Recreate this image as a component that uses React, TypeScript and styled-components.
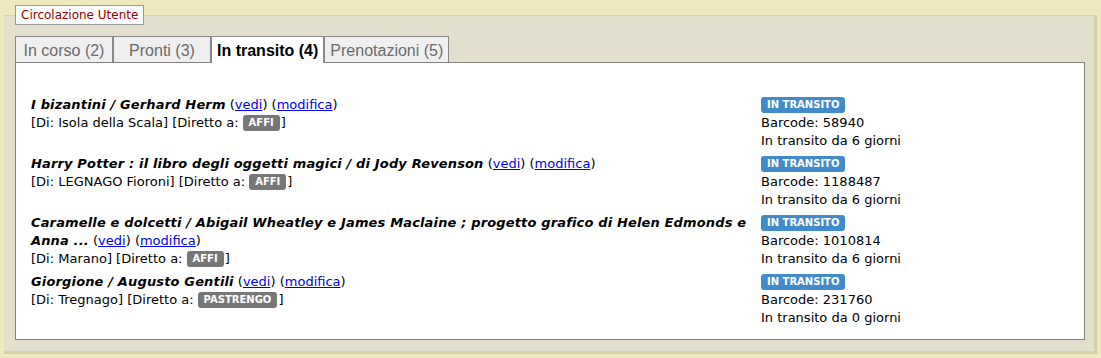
import React from "react";
import styled, { createGlobalStyle, css } from "styled-components";

const GlobalStyle = createGlobalStyle`
  html, body {
    margin: 0;
    padding: 0;
    background: #eee8bd;
  }
  body {
    font-family: "DejaVu Sans", Tahoma, sans-serif;
    font-size: 13px;
    color: #000;
  }
`;

const Page = styled.div`
  padding: 5px 4px 3px 4px;
`;

const Frame = styled.fieldset`
  margin: 0;
  padding: 0 9px 11px 10px;
  background: #e2dfcc;
  border-style: solid;
  border-color: #d8d3ae #d6d0a8 #d6d0a8 #e2dfcc;
  border-width: 1px 3px 3px 1px;
  min-width: 0;
`;

const Legend = styled.legend`
  padding: 0 5px;
  margin: 0;
  height: 20px;
  box-sizing: border-box;
  line-height: 18px;
  background: #fff;
  border: 1px solid #999;
  color: #990000;
  font-family: "DejaVu Sans", Tahoma, sans-serif;
  font-size: 12px;
`;

const TabBar = styled.div`
  display: flex;
  align-items: flex-end;
  margin-top: 11px;
`;

const Tab = styled.div<{ $active?: boolean }>`
  box-sizing: border-box;
  min-width: 98px;
  height: 26px;
  padding: 2px 5px 0;
  border: 1px solid #888;
  border-bottom: none;
  background: #efefef;
  color: #6b6b6b;
  font-family: "Liberation Sans", Arial, sans-serif;
  font-size: 16px;
  line-height: 23px;
  text-align: center;
  white-space: nowrap;
  ${(p) =>
    p.$active &&
    css`
      height: 27px;
      margin-bottom: -1px;
      background: #fff;
      color: #000;
      font-weight: bold;
      position: relative;
      z-index: 1;
    `}
`;

const Panel = styled.div`
  background: #fff;
  border: 1px solid #808080;
  padding: 31px 15px 9px 15px;
`;

const Row = styled.div`
  display: grid;
  grid-template-columns: 730px 1fr;
  padding: 2px 0 3px;
  line-height: 18px;
`;

const Left = styled.div``;

const Right = styled.div`
  display: flex;
  flex-direction: column;
  align-items: flex-start;
`;

const Title = styled.span`
  font-weight: bold;
  font-style: italic;
  letter-spacing: 0.15px;
`;

const Link = styled.a`
  color: #0000ee;
  text-decoration: underline;
`;

const Label = styled.span<{ $tone: "blue" | "gray" }>`
  display: inline-block;
  height: 16px;
  line-height: 16px;
  padding: 0 6px;
  border-radius: 3px;
  color: #fff;
  font-family: "DejaVu Sans", Verdana, sans-serif;
  font-size: 10px;
  font-weight: bold;
  white-space: nowrap;
  background: ${(p) => (p.$tone === "blue" ? "#428bca" : "#777777")};
`;

const StatusLabel = styled(Label)`
  margin: 1px 0;
`;

const InlineLabel = styled(Label)`
  vertical-align: top;
  margin: 1px 1px 0 4px;
`;

type Item = {
  title: string;
  from: string;
  to: string;
  barcode: string;
  days: number;
};

const items: Item[] = [
  { title: "I bizantini / Gerhard Herm", from: "Isola della Scala", to: "AFFI", barcode: "58940", days: 6 },
  {
    title: "Harry Potter : il libro degli oggetti magici / di Jody Revenson",
    from: "LEGNAGO Fioroni",
    to: "AFFI",
    barcode: "1188487",
    days: 6,
  },
  {
    title:
      "Caramelle e dolcetti / Abigail Wheatley e James Maclaine ; progetto grafico di Helen Edmonds e Anna ...",
    from: "Marano",
    to: "AFFI",
    barcode: "1010814",
    days: 6,
  },
  { title: "Giorgione / Augusto Gentili", from: "Tregnago", to: "PASTRENGO", barcode: "231760", days: 0 },
];

const tabs = [
  { label: "In corso (2)" },
  { label: "Pronti (3)" },
  { label: "In transito (4)", active: true },
  { label: "Prenotazioni (5)" },
];

export default function App() {
  return (
    <>
      <GlobalStyle />
      <Page>
        <Frame>
          <Legend>Circolazione Utente</Legend>
          <TabBar>
            {tabs.map((t) => (
              <Tab key={t.label} $active={t.active}>
                {t.label}
              </Tab>
            ))}
          </TabBar>
          <Panel>
            {items.map((it) => (
              <Row key={it.barcode}>
                <Left>
                  <Title>{it.title}</Title> (<Link href="#">vedi</Link>) (<Link href="#">modifica</Link>)
                  <br />
                  [Di: {it.from}] [Diretto a:<InlineLabel $tone="gray">{it.to}</InlineLabel>]
                </Left>
                <Right>
                  <StatusLabel $tone="blue">IN TRANSITO</StatusLabel>
                  <span>Barcode: {it.barcode}</span>
                  <span>In transito da {it.days} giorni</span>
                </Right>
              </Row>
            ))}
          </Panel>
        </Frame>
      </Page>
    </>
  );
}
